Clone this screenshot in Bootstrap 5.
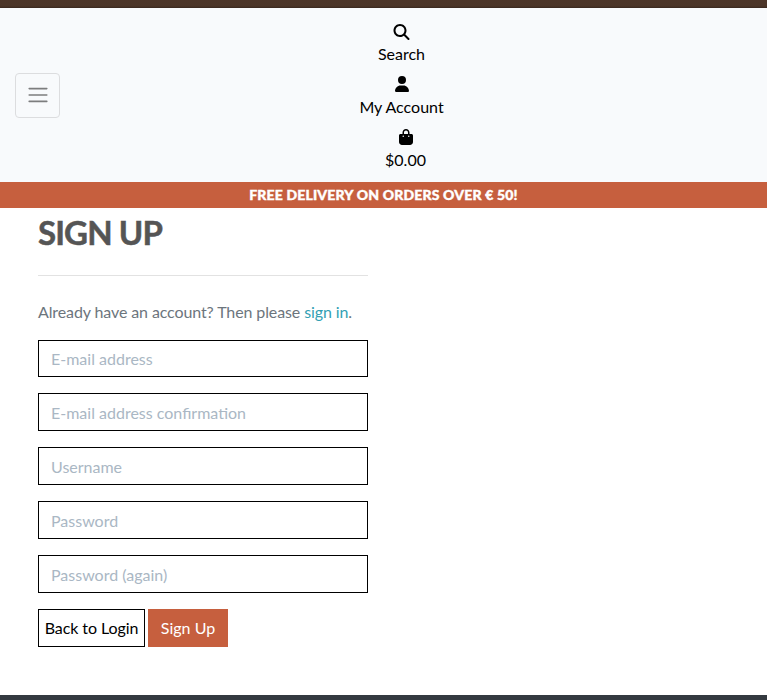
<!DOCTYPE html>
<html lang="en">
<head>
<meta charset="utf-8">
<meta name="viewport" content="width=device-width, initial-scale=1">
<title>Sign Up</title>
<link href="https://cdn.jsdelivr.net/npm/bootstrap@5.3.0/dist/css/bootstrap.min.css" rel="stylesheet">
<style>
body { font-family: Lato, sans-serif; color: #555; height: 700px; }
.top-strip { height: 8px; background: linear-gradient(#4c3529 0, #4b3528 6px, #38271f 8px); }
.site-header { height: 174px; background: #f8fafc; padding: 0 24px 0 15px; }
.menu-btn { width: 45px; height: 45px; border: 1px solid #dcdddf; border-radius: 4px; }
.site-links { padding-top: 14px; }
.site-links a { height: 53px; line-height: 24px; color: #000; }
.site-links a:last-child { margin-left: 8px; }
.site-links svg { margin-top: 1px; margin-bottom: 3px; }
.site-links a:first-child svg { margin-top: 2px; margin-bottom: 2px; }
.banner { height: 26px; line-height: 26px; background: #c65f3e; font-size: 14px; font-weight: 900; letter-spacing: .17px; -webkit-text-stroke: .4px #fff; }
.form-area { width: 330px; margin-left: 38px; }
.form-area h1 { font-size: 33px; line-height: 42px; font-weight: 700; letter-spacing: -.9px; -webkit-text-stroke: .5px #555; padding-top: 3px; margin-bottom: 22px; }
.rule { height: 1px; background: #e2e2e2; }
.hint { color: #6c757d; margin: 24px 0 16px; line-height: 24px; letter-spacing: -.11px; }
.hint a { color: #329fb4; }
.form-area .form-control { height: 38px; margin-bottom: 16px; border-color: #000; color: #000; padding-top: 7px; }
.form-area .form-control:first-child { height: 37px; padding-top: 5px; }
.form-control::placeholder { color: #aab7c4; opacity: 1; }
.form-area .btn { height: 38px; line-height: 24px; }
.form-actions { gap: 3px; }
.btn-back { width: 107px; border-color: #000; color: #000; padding: 6px 0; letter-spacing: -.07px; }
.btn-sign { width: 80px; background: #c65f3e; color: #fff; padding: 6px 0; }
.foot { height: 5px; background: #343a40; }
</style>
</head>
<body class="d-flex flex-column overflow-hidden">
<div class="top-strip flex-shrink-0"></div>
<header class="site-header d-flex align-items-center flex-shrink-0">
  <button class="menu-btn bg-transparent p-0 d-flex align-items-center justify-content-center" type="button" aria-label="Menu">
    <svg width="24" height="24" viewBox="0 0 30 30" fill="none" stroke="#000" stroke-opacity=".5" stroke-width="2" stroke-linecap="round" stroke-miterlimit="10"><path d="M4 7h22M4 15h22M4 23h22"/></svg>
  </button>
  <nav class="site-links flex-grow-1 d-flex flex-column align-items-center align-self-start">
    <a href="#" class="text-decoration-none d-flex flex-column align-items-center">
      <svg width="17" height="16" viewBox="0 0 512 512"><path d="M416 208c0 45.9-14.9 88.3-40 122.7L502.6 457.4c12.5 12.5 12.5 32.8 0 45.3s-32.8 12.5-45.3 0L330.7 376c-34.4 25.2-76.8 40-122.7 40C93.1 416 0 322.9 0 208S93.1 0 208 0S416 93.1 416 208zM208 352a144 144 0 1 0 0-288 144 144 0 1 0 0 288z"/></svg>
      <span>Search</span>
    </a>
    <a href="#" class="text-decoration-none d-flex flex-column align-items-center">
      <svg width="14" height="16" viewBox="0 0 448 512"><path d="M224 256A128 128 0 1 0 224 0a128 128 0 1 0 0 256zm-45.7 48C79.8 304 0 383.8 0 482.3C0 498.7 13.3 512 29.7 512H418.3c16.4 0 29.7-13.3 29.7-29.7C448 383.8 368.2 304 269.7 304H178.3z"/></svg>
      <span>My Account</span>
    </a>
    <a href="#" class="text-decoration-none d-flex flex-column align-items-center">
      <svg width="14" height="16" viewBox="0 0 448 512"><path d="M160 112c0-35.3 28.7-64 64-64s64 28.7 64 64v48H160V112zm-48 48H48c-26.5 0-48 21.5-48 48V416c0 53 43 96 96 96H352c53 0 96-43 96-96V208c0-26.5-21.5-48-48-48H336V112C336 50.1 285.9 0 224 0S112 50.1 112 112v48zm24 48a24 24 0 1 1 0 48 24 24 0 1 1 0-48zm152 24a24 24 0 1 1 48 0 24 24 0 1 1-48 0z"/></svg>
      <span>$0.00</span>
    </a>
  </nav>
</header>
<div class="banner text-white text-center flex-shrink-0">FREE DELIVERY ON ORDERS OVER € 50!</div>
<main class="form-area flex-grow-1">
  <h1>SIGN UP</h1>
  <div class="rule"></div>
  <p class="hint">Already have an account? Then please <a href="#" class="text-decoration-none">sign in</a>.</p>
  <form>
    <input class="form-control rounded-0" type="email" placeholder="E-mail address">
    <input class="form-control rounded-0" type="email" placeholder="E-mail address confirmation">
    <input class="form-control rounded-0" type="text" placeholder="Username">
    <input class="form-control rounded-0" type="password" placeholder="Password">
    <input class="form-control rounded-0" type="password" placeholder="Password (again)">
    <div class="form-actions d-flex">
      <a href="#" class="btn btn-back rounded-0 bg-white">Back to Login</a>
      <button class="btn btn-sign rounded-0" type="button">Sign Up</button>
    </div>
  </form>
</main>
<footer class="foot flex-shrink-0"></footer>
<script src="https://cdn.jsdelivr.net/npm/bootstrap@5.3.0/dist/js/bootstrap.bundle.min.js"></script>
</body>
</html>
